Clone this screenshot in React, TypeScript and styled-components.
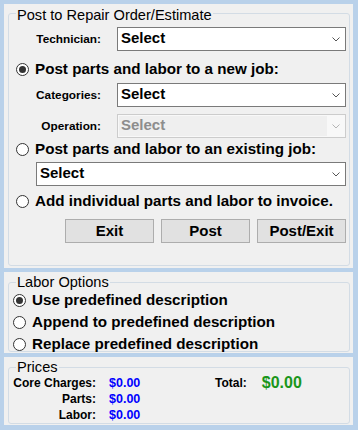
import { FC } from 'react';
import styled, { createGlobalStyle } from 'styled-components';

const GlobalStyle = createGlobalStyle`
  html, body {
    margin: 0;
    padding: 0;
  }
  body {
    font-family: 'Liberation Sans', Arial, sans-serif;
    color: #000;
  }
`;

const Frame = styled.div`
  width: 358px;
  height: 430px;
  box-sizing: border-box;
  background: #b9d1ea;
  padding: 4px 5px 5px 4px;
  display: flex;
  flex-direction: column;
  gap: 4px;
`;

const Panel = styled.div<{ $height: number; $top: number; $bottom: number }>`
  height: ${p => p.$height}px;
  box-sizing: border-box;
  background: #f0f0f0;
  padding: ${p => p.$top}px 3px ${p => p.$bottom}px 4px;
  display: flex;
  flex-direction: column;
`;

const Group = styled.fieldset<{ $padLeft: number }>`
  flex: 1;
  margin: 0;
  min-width: 0;
  min-height: 0;
  border: 1px solid #d3dce5;
  border-radius: 3px;
  padding: 0 3px 0 ${p => p.$padLeft}px;
`;

const Legend = styled.legend<{ $padTop: number; $shift: number }>`
  font-size: 14.6px;
  line-height: 16px;
  padding: ${p => p.$padTop}px 1px 0;
  margin-left: ${p => p.$shift}px;
`;

const Body = styled.div`
  display: flex;
  flex-direction: column;
`;

const FieldRow = styled.div<{ $mt: number }>`
  display: flex;
  align-items: center;
  height: 24px;
  margin-top: ${p => p.$mt}px;
`;

const FieldLabel = styled.span`
  width: 85px;
  flex-shrink: 0;
  margin-right: 16px;
  text-align: right;
  font-size: 11.8px;
  font-weight: bold;
`;

const Combo = styled.div<{ $disabled?: boolean; $indent?: number }>`
  flex: 1;
  height: 24px;
  box-sizing: border-box;
  display: flex;
  margin-left: ${p => p.$indent ?? 0}px;
  border: 1px solid ${p => (p.$disabled ? '#cccccc' : '#7a7a7a')};
  background: ${p => (p.$disabled ? '#f8f8f8' : '#fff')};
`;

const ComboText = styled.span<{ $disabled?: boolean }>`
  flex: 1;
  font-size: 15px;
  font-weight: bold;
  line-height: ${p => (p.$disabled ? 18 : 20)}px;
  padding: 0 0 2px ${p => (p.$disabled ? 2 : 3)}px;
  margin: ${p => (p.$disabled ? '1px 0 1px 1px' : '0')};
  color: ${p => (p.$disabled ? '#8d8d8d' : '#000')};
  background: ${p => (p.$disabled ? '#efefef' : 'transparent')};
`;

const ComboArrow = styled.span`
  width: 18px;
  display: flex;
  align-items: center;
  justify-content: center;
`;

const OptionRow = styled.label<{ $mt: number }>`
  display: flex;
  align-items: center;
  gap: 6px;
  height: 20px;
  margin-top: ${p => p.$mt}px;
  font-size: 15.2px;
  font-weight: bold;
  line-height: 20px;
  white-space: nowrap;
`;

const RadioMark = styled.span<{ $checked?: boolean }>`
  width: 13px;
  height: 13px;
  box-sizing: border-box;
  flex-shrink: 0;
  border-radius: 50%;
  border: 1px solid #333;
  background: #fff;
  display: flex;
  align-items: center;
  justify-content: center;

  &::after {
    content: '';
    width: 7px;
    height: 7px;
    border-radius: 50%;
    background: #333;
    display: ${p => (p.$checked ? 'block' : 'none')};
  }
`;

const ButtonBar = styled.div`
  display: flex;
  justify-content: flex-end;
  gap: 7px;
  margin-top: 8px;
`;

const Button = styled.button`
  width: 89px;
  height: 24px;
  box-sizing: border-box;
  padding: 0;
  background: #e1e1e1;
  border: 1px solid #adadad;
  color: #000;
  font: bold 15px/22px 'Liberation Sans', Arial, sans-serif;
`;

const PriceGrid = styled.div`
  display: grid;
  grid-template-columns: 87px 119px auto 1fr;
  grid-auto-rows: 16px;
  align-items: center;
`;

const PriceLabel = styled.span`
  font-size: 12px;
  font-weight: bold;
  text-align: right;
  white-space: nowrap;
`;

const PriceValue = styled.span<{ $total?: boolean }>`
  font-weight: bold;
  font-size: ${p => (p.$total ? 16 : 12.5)}px;
  color: ${p => (p.$total ? '#1a961a' : '#0000ff')};
  padding-left: ${p => (p.$total ? 15 : 13)}px;
  line-height: 16px;
`;

const Chevron: FC<{ color: string }> = ({ color }) => (
  <svg width="8" height="5" viewBox="0 0 8 5">
    <polyline points="0.5,0.5 4,4 7.5,0.5" fill="none" stroke={color} strokeWidth="1" />
  </svg>
);

const Select: FC<{ disabled?: boolean; indent?: number }> = ({ disabled, indent }) => (
  <Combo $disabled={disabled} $indent={indent}>
    <ComboText $disabled={disabled}>Select</ComboText>
    <ComboArrow>
      <Chevron color={disabled ? '#b5b5b5' : '#555'} />
    </ComboArrow>
  </Combo>
);

const Option: FC<{ label: string; checked?: boolean; mt: number }> = ({ label, checked, mt }) => (
  <OptionRow $mt={mt}>
    <RadioMark $checked={checked} />
    {label}
  </OptionRow>
);

export default function App() {
  return (
    <>
      <GlobalStyle />
      <Frame>
        <Panel $height={264} $top={0} $bottom={2}>
          <Group $padLeft={7}>
            <Legend $padTop={3} $shift={0}>Post to Repair Order/Estimate</Legend>
            <Body>
              <FieldRow $mt={4}>
                <FieldLabel>Technician:</FieldLabel>
                <Select />
              </FieldRow>
              <Option mt={8} checked label="Post parts and labor to a new job:" />
              <FieldRow $mt={4}>
                <FieldLabel>Categories:</FieldLabel>
                <Select />
              </FieldRow>
              <FieldRow $mt={7}>
                <FieldLabel>Operation:</FieldLabel>
                <Select disabled />
              </FieldRow>
              <Option mt={1} label="Post parts and labor to an existing job:" />
              <FieldRow $mt={3}>
                <Select indent={20} />
              </FieldRow>
              <Option mt={5} label="Add individual parts and labor to invoice." />
              <ButtonBar>
                <Button>Exit</Button>
                <Button>Post</Button>
                <Button>Post/Exit</Button>
              </ButtonBar>
            </Body>
          </Group>
        </Panel>

        <Panel $height={81} $top={2} $bottom={1}>
          <Group $padLeft={4}>
            <Legend $padTop={0} $shift={3}>Labor Options</Legend>
            <Body>
              <Option mt={0} checked label="Use predefined description" />
              <Option mt={2} label="Append to predefined description" />
              <Option mt={2} label="Replace predefined description" />
            </Body>
          </Group>
        </Panel>

        <Panel $height={68} $top={2} $bottom={1}>
          <Group $padLeft={0}>
            <Legend $padTop={0} $shift={7}>Prices</Legend>
            <PriceGrid>
              <PriceLabel>Core Charges:</PriceLabel>
              <PriceValue>$0.00</PriceValue>
              <PriceLabel>Total:</PriceLabel>
              <PriceValue $total>$0.00</PriceValue>
              <PriceLabel>Parts:</PriceLabel>
              <PriceValue>$0.00</PriceValue>
              <span />
              <span />
              <PriceLabel>Labor:</PriceLabel>
              <PriceValue>$0.00</PriceValue>
            </PriceGrid>
          </Group>
        </Panel>
      </Frame>
    </>
  );
}
